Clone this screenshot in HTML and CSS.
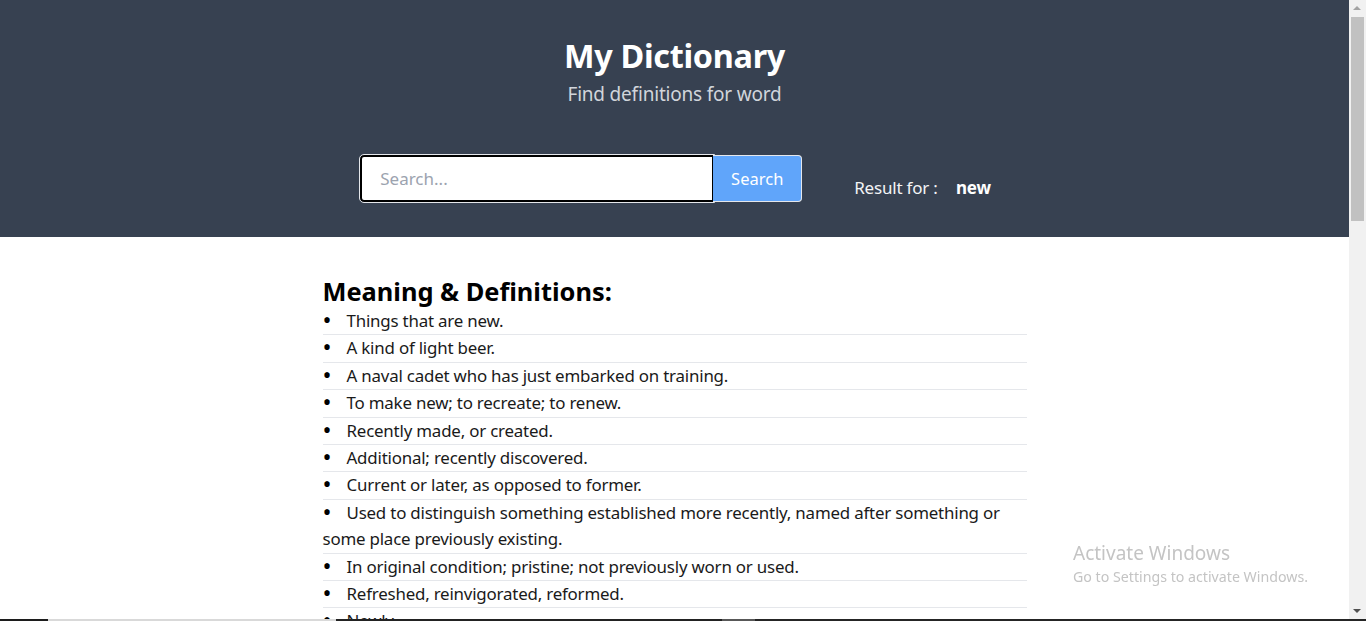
FILE: index.html
```html
<!DOCTYPE html>
<html lang="en">
<head>
<meta charset="utf-8">
<title>My Dictionary</title>
<link rel="stylesheet" href="styles.css">
</head>
<body>
<div class="window">
  <div class="page">
    <header class="hero">
      <h1 class="title">My Dictionary</h1>
      <p class="subtitle">Find definitions for word</p>
      <div class="search-row">
        <form class="search">
          <input class="search-input" type="text" placeholder="Search...">
          <button class="search-btn" type="button">Search</button>
        </form>
        <div class="result">Result for : <strong class="result-word">new</strong></div>
      </div>
    </header>
    <main class="content">
      <h2 class="heading">Meaning &amp; Definitions:</h2>
      <ul class="defs">
        <li>Things that are new.</li>
        <li>A kind of light beer.</li>
        <li>A naval cadet who has just embarked on training.</li>
        <li>To make new; to recreate; to renew.</li>
        <li>Recently made, or created.</li>
        <li>Additional; recently discovered.</li>
        <li>Current or later, as opposed to former.</li>
        <li>Used to distinguish something established more recently, named after something or some place previously existing.</li>
        <li>In original condition; pristine; not previously worn or used.</li>
        <li>Refreshed, reinvigorated, reformed.</li>
        <li>Newly.</li>
      </ul>
    </main>
  </div>
  <div class="scrollbar">
    <div class="sb-arrow sb-up"></div>
    <div class="sb-track"><div class="sb-thumb"></div></div>
    <div class="sb-arrow sb-down"></div>
  </div>
</div>
<div class="watermark">
  <div class="wm-title">Activate Windows</div>
  <div class="wm-sub">Go to Settings to activate Windows.</div>
</div>
<div class="taskbar">
  <span class="tb-a"></span><span class="tb-b"></span><span class="tb-c"></span><span class="tb-d"></span><span class="tb-e"></span>
</div>
</body>
</html>
```

FILE: styles.css
```css
* { box-sizing: border-box; }
html, body {
  margin: 0;
  padding: 0;
  height: 100%;
  overflow: hidden;
}
body {
  font-family: "Noto Sans", "Open Sans", sans-serif;
  background: #ffffff;
  color: #000;
}
.window {
  display: flex;
  height: 619px;
}
.page {
  flex: 1;
  min-width: 0;
  overflow: hidden;
}
.hero {
  background: #374151;
  height: 237px;
  padding-top: 34px;
  text-align: center;
}
.title {
  margin: 0;
  color: #ffffff;
  font-size: 32.4px;
  font-weight: 700;
  line-height: 42px;
  letter-spacing: -0.3px;
}
.subtitle {
  margin: 0;
  color: #d1d5db;
  font-size: 19px;
  line-height: 37px;
  letter-spacing: -0.2px;
}
.search-row {
  margin-top: 42px;
  display: flex;
  justify-content: center;
  align-items: flex-start;
  gap: 52px;
  padding-left: 2px;
}
.search {
  display: flex;
  margin: 0;
}
.search-input {
  width: 354px;
  height: 47px;
  border: 2px solid #000;
  border-radius: 4px 0 0 4px;
  outline: 1px solid #e5e7eb;
  padding: 0 18px;
  font-family: inherit;
  font-size: 17px;
  background: #fff;
}
.search-input::placeholder { color: #9ca3af; }
.search-btn {
  width: 89px;
  height: 47px;
  margin-left: -1px;
  background: #60a5fa;
  border: 1px solid #e5e7eb;
  border-left: none;
  border-radius: 0 4px 4px 0;
  color: #ffffff;
  font-family: inherit;
  font-size: 16.5px;
}
.result {
  margin-top: 20px;
  color: #f3f4f6;
  font-size: 17px;
  line-height: 26px;
  letter-spacing: -0.2px;
}
.result-word {
  margin-left: 14px;
  color: #fff;
  font-weight: 700;
}
.content {
  width: 704px;
  margin: 37px auto 0;
}
.heading {
  margin: 0;
  font-size: 25.4px;
  font-weight: 700;
  line-height: 34px;
}
.defs {
  margin: 0;
  padding: 0;
  list-style: none;
}
.defs li {
  font-size: 16.9px;
  line-height: 26.4px;
  color: #1a1a1a;
  border-bottom: 1px solid #e5e7eb;
  letter-spacing: -0.2px;
}
.defs li::before {
  content: "\2022";
  display: inline-block;
  width: 24px;
  padding-left: 0;
  font-size: 24px;
  line-height: 1;
  vertical-align: -2px;
  color: #000;
}
.scrollbar {
  width: 17px;
  background: #f1f1f1;
  display: flex;
  flex-direction: column;
  align-items: center;
}
.sb-arrow {
  height: 17px;
  width: 17px;
  position: relative;
}
.sb-up::after, .sb-down::after {
  content: "";
  position: absolute;
  left: 4px;
  border-left: 4px solid transparent;
  border-right: 4px solid transparent;
}
.sb-up::after { top: 6px; border-bottom: 4px solid #a3a3a3; }
.sb-down::after { top: 7px; border-top: 4px solid #505050; }
.sb-track {
  flex: 1;
  width: 17px;
  padding: 0 2px;
}
.sb-thumb {
  height: 204px;
  background: #c1c1c1;
}
.watermark {
  position: fixed;
  left: 1073px;
  top: 541px;
  color: #c4c4c4;
  font-family: "Noto Sans", sans-serif;
  pointer-events: none;
}
.wm-title {
  font-size: 19px;
  line-height: 25px;
}
.wm-sub {
  font-size: 14.2px;
  line-height: 22px;
}
.taskbar {
  display: flex;
  height: 2px;
  background: #202020;
}
.taskbar span { display: block; height: 2px; }
.tb-a { width: 48px; background: #1c1c1c; }
.tb-b { width: 288px; background: #d9d9d9; }
.tb-c { width: 386px; background: #222; }
.tb-d { width: 33px; background: #585858; }
.tb-e { flex: 1; background: #252525; }
```
